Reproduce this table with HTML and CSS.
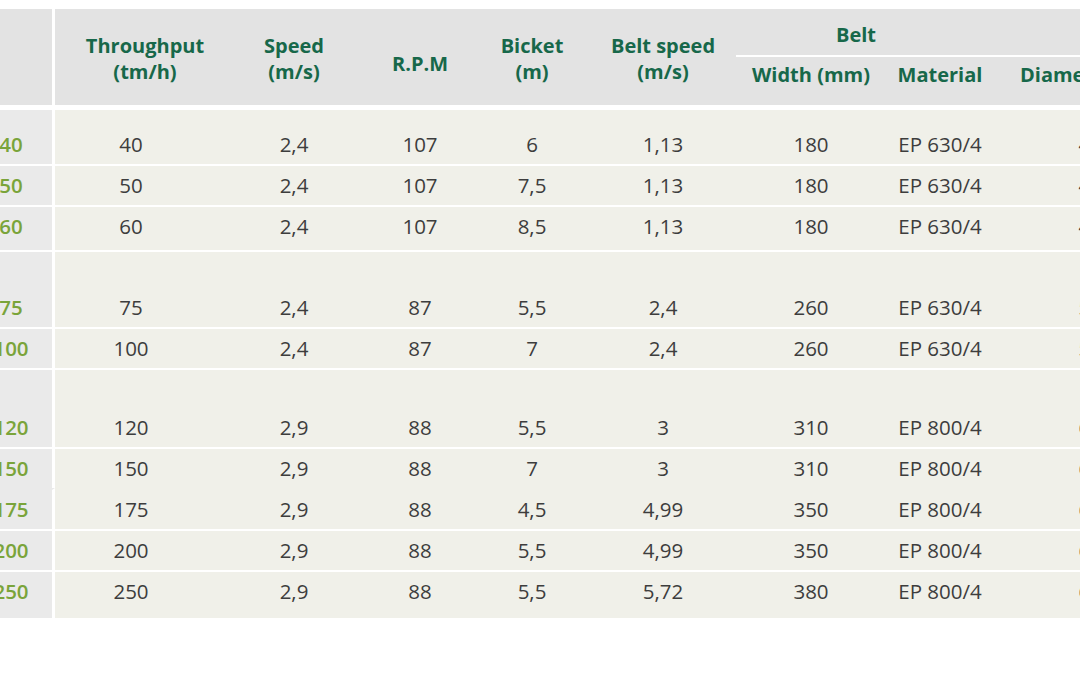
FILE: index.html
```html
<!DOCTYPE html>
<html lang="en">
<head>
<meta charset="utf-8">
<title>Bucket elevator specifications</title>
<link rel="stylesheet" href="styles.css">
</head>
<body>
<div class="sheet">
<table class="spec">
  <colgroup>
    <col class="w-model"><col class="w-thr"><col class="w-speed"><col class="w-rpm"><col class="w-bicket"><col class="w-bspeed"><col class="w-width"><col class="w-mat"><col class="w-diam">
  </colgroup>
  <thead>
    <tr class="head-a">
      <th class="model-h" rowspan="2"></th>
      <th class="two thr-h" rowspan="2">Throughput<br>(tm/h)</th>
      <th class="two" rowspan="2">Speed<br>(m/s)</th>
      <th class="one" rowspan="2">R.P.M</th>
      <th class="two" rowspan="2">Bicket<br>(m)</th>
      <th class="two" rowspan="2">Belt speed<br>(m/s)</th>
      <th class="group" colspan="3">Belt</th>
    </tr>
    <tr class="head-b">
      <th class="sub">Width (mm)</th>
      <th class="sub">Material</th>
      <th class="sub">Diameter (mm)</th>
    </tr>
  </thead>
  <tbody>
    <tr class="gap g1"><td class="model"></td><td colspan="8"></td></tr>
    <tr class="row"><td class="model"><span class="mn">40</span></td><td class="thr">40</td><td>2,4</td><td>107</td><td>6</td><td>1,13</td><td>180</td><td>EP 630/4</td><td>400</td></tr>
    <tr class="row line"><td class="model"><span class="mn">50</span></td><td class="thr">50</td><td>2,4</td><td>107</td><td>7,5</td><td>1,13</td><td>180</td><td>EP 630/4</td><td>400</td></tr>
    <tr class="row line last"><td class="model"><span class="mn">60</span></td><td class="thr">60</td><td>2,4</td><td>107</td><td>8,5</td><td>1,13</td><td>180</td><td>EP 630/4</td><td>400</td></tr>

    <tr class="gap g2 line"><td class="model"></td><td colspan="8"></td></tr>
    <tr class="row"><td class="model"><span class="mn">75</span></td><td class="thr">75</td><td>2,4</td><td>87</td><td>5,5</td><td>2,4</td><td>260</td><td>EP 630/4</td><td>500</td></tr>
    <tr class="row line"><td class="model"><span class="mn">100</span></td><td class="thr">100</td><td>2,4</td><td>87</td><td>7</td><td>2,4</td><td>260</td><td>EP 630/4</td><td>500</td></tr>

    <tr class="gap g3 line"><td class="model"></td><td colspan="8"></td></tr>
    <tr class="row"><td class="model"><span class="mn">120</span></td><td class="thr">120</td><td>2,9</td><td>88</td><td>5,5</td><td>3</td><td>310</td><td>EP 800/4</td><td>630</td></tr>
    <tr class="row line"><td class="model"><span class="mn">150</span></td><td class="thr">150</td><td>2,9</td><td>88</td><td>7</td><td>3</td><td>310</td><td>EP 800/4</td><td>630</td></tr>
    <tr class="row noline"><td class="model"><span class="mn">175</span></td><td class="thr">175</td><td>2,9</td><td>88</td><td>4,5</td><td>4,99</td><td>350</td><td>EP 800/4</td><td>630</td></tr>
    <tr class="row line"><td class="model"><span class="mn">200</span></td><td class="thr">200</td><td>2,9</td><td>88</td><td>5,5</td><td>4,99</td><td>350</td><td>EP 800/4</td><td>630</td></tr>
    <tr class="row line end"><td class="model"><span class="mn">250</span></td><td class="thr">250</td><td>2,9</td><td>88</td><td>5,5</td><td>5,72</td><td>380</td><td>EP 800/4</td><td>630</td></tr>
  </tbody>
</table>
</div>
</body>
</html>
```

FILE: styles.css
```css
html, body {
  margin: 0;
  padding: 0;
  background: #ffffff;
}

body {
  width: 1080px;
  height: 675px;
  overflow: hidden;
  font-family: "Open Sans", "Noto Sans", sans-serif;
}

.sheet {
  padding-top: 9px;
}

.spec {
  border-collapse: separate;
  border-spacing: 0;
  table-layout: fixed;
  width: 1198px;
}

.w-model { width: 55px; }
.w-thr { width: 167px; }
.w-speed { width: 144px; }
.w-rpm { width: 108px; }
.w-bicket { width: 116px; }
.w-bspeed { width: 146px; }
.w-width { width: 150px; }
.w-mat { width: 108px; }
.w-diam { width: 204px; }

/* ---------- header ---------- */
.spec th {
  background: #e3e3e3;
  color: #17684a;
  font-size: 20px;
  font-weight: 700;
  line-height: 26px;
  text-align: center;
  vertical-align: top;
  padding: 0;
  white-space: nowrap;
}

.spec thead tr:last-child th,
.spec th[rowspan] {
  border-bottom: 5px solid #ffffff;
}

.spec th.model-h {
  border-right: 3px solid #ffffff;
}

.spec th.two {
  padding-top: 24px;
}

.spec th.one {
  padding-top: 42px;
}

.spec th.thr-h {
  padding-left: 13px;
}

.head-a th.group {
  height: 46px;
  box-sizing: border-box;
  padding: 13px 0 7px 100px;
  text-align: left;
  border-bottom: 2px solid #ffffff;
}

.head-b th.sub {
  height: 53px;
  box-sizing: border-box;
  padding-top: 5px;
}

/* ---------- body ---------- */
.spec td {
  background: #f0f0e9;
  color: #3d3d3d;
  font-size: 20.5px;
  font-weight: 400;
  line-height: 39px;
  height: 39px;
  padding: 0;
  text-align: center;
  vertical-align: top;
  white-space: nowrap;
  box-sizing: content-box;
}

.spec td.model {
  background: #eaeaea;
  color: #7aa43a;
  font-weight: 600;
  text-align: left;
  border-right: 3px solid #ffffff;
  padding-left: 0;
}

.mn {
  display: inline-block;
  width: 60px;
  margin-left: -19px;
  text-align: center;
}

.spec td.thr {
  padding-right: 15px;
}

.row.line td {
  border-top: 2px solid #ffffff;
}

.row.noline td {
  border-top: 2px solid transparent;
}

.row.last td {
  padding-bottom: 4px;
}

.row.end td {
  padding-bottom: 7px;
}

.gap td {
  line-height: 0;
  font-size: 0;
}

.gap.g1 td { height: 15px; }
.gap.g2 td { height: 36px; }
.gap.g3 td { height: 38px; }

.gap.line td {
  border-top: 2px solid #ffffff;
}
```
